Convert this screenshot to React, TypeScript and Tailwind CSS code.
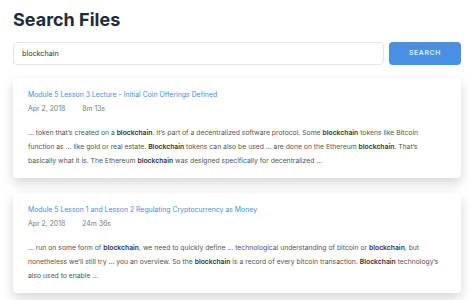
import { Fragment } from 'react';

type Result = {
  title: string;
  date: string;
  duration: string;
  snippet: (string | { b: string })[];
};

const results: Result[] = [
  {
    title: 'Module 5 Lesson 3 Lecture - Initial Coin Offerings Defined',
    date: 'Apr 2, 2018',
    duration: '8m 13s',
    snippet: [
      '... token that\u2019s created on a ',
      { b: 'blockchain' },
      '. It\u2019s part of a decentralized software protocol. Some ',
      { b: 'blockchain' },
      ' tokens like Bitcoin function as ... like gold or real estate. ',
      { b: 'Blockchain' },
      ' tokens can also be used ... are done on the Ethereum ',
      { b: 'blockchain' },
      '. That\u2019s basically what it is. The Ethereum ',
      { b: 'blockchain' },
      ' was designed specifically for decentralized ...',
    ],
  },
  {
    title: 'Module 5 Lesson 1 and Lesson 2 Regulating Cryptocurrency as Money',
    date: 'Apr 2, 2018',
    duration: '24m 36s',
    snippet: [
      '... run on some form of ',
      { b: 'blockchain' },
      ', we need to quickly define ... technological understanding of bitcoin or ',
      { b: 'blockchain' },
      ', but nonetheless we\u2019ll still try ... you an overview. So the ',
      { b: 'blockchain' },
      ' is a record of every bitcoin transaction. ',
      { b: 'Blockchain' },
      ' technology\u2019s also used to enable ...',
    ],
  },
];

function ResultCard({ r }: { r: Result }) {
  return (
    <div className="rounded bg-white pl-[15px] pr-[14px] pt-[10px] pb-[10px] shadow-[0_5px_12px_rgba(0,0,0,0.17)]">
      <a className="block text-[6.9px] leading-[14px] text-[#4a8fd8]">{r.title}</a>
      <div className="flex gap-[17px] text-[6.9px] leading-[14px] text-[#7a7a7a]">
        <span>{r.date}</span>
        <span>{r.duration}</span>
      </div>
      <p className="mt-[10px] pr-[6px] text-[6.8px] leading-[14px] text-[#555]">
        {r.snippet.map((s, i) => (
          <Fragment key={i}>
            {typeof s === 'string' ? s : <strong className="font-semibold text-[#333]">{s.b}</strong>}
          </Fragment>
        ))}
      </p>
    </div>
  );
}

export default function App() {
  return (
    <div className="min-h-screen bg-white px-[13px] pt-[8px] font-['Inter',sans-serif]">
      <h1 className="text-[18px] font-bold leading-[24px] text-[#1f2a3a]">Search Files</h1>
      <div className="mt-[10px] flex gap-[5px]">
        <input
          className="h-[23px] flex-1 rounded-sm border border-[#e6e6e6] px-[8px] text-[7.2px] text-[#333] outline-none"
          defaultValue="blockchain"
        />
        <button className="h-[23px] w-[72px] rounded-sm bg-[#4a90e2] text-[6.8px] font-semibold tracking-[0.1em] text-white/85">
          SEARCH
        </button>
      </div>
      <div className="mt-[13px] flex flex-col gap-[15px]">
        {results.map((r) => (
          <ResultCard key={r.title} r={r} />
        ))}
      </div>
    </div>
  );
}
